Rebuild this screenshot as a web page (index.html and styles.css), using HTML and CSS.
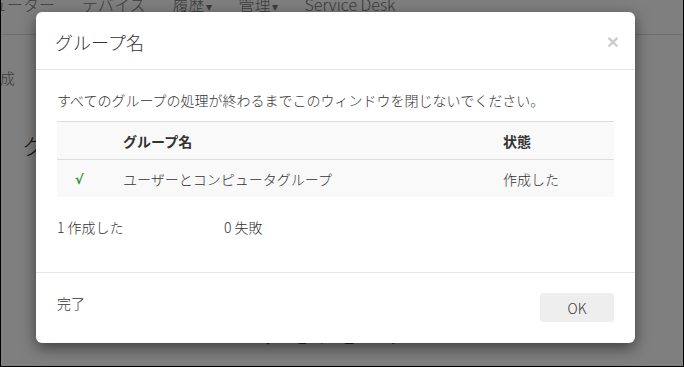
FILE: index.html
```html
<!DOCTYPE html>
<html lang="ja">
<head>
<meta charset="utf-8">
<link rel="stylesheet" href="styles.css">
</head>
<body>
<div class="frame">
  <div class="page">
    <nav class="nav">
      <span class="nav-item first">コンピューター</span>
      <span class="nav-item">デバイス</span>
      <span class="nav-item">履歴<span class="caret">▾</span></span>
      <span class="nav-item">管理<span class="caret">▾</span></span>
      <span class="nav-item">Service Desk</span>
    </nav>
    <div class="crumb">作成</div>
    <div class="page-title">グループの作成</div>
    <div class="under">ユーザーとコンピュータ</div>
  </div>
  <div class="overlay"></div>
  <div class="modal">
    <div class="modal-header">
      <h4 class="modal-title">グループ名</h4>
      <span class="close">×</span>
    </div>
    <div class="modal-body">
      <p class="notice">すべてのグループの処理が終わるまでこのウィンドウを閉じないでください。</p>
      <div class="table">
        <div class="row head">
          <div class="cell c1"></div>
          <div class="cell c2">グループ名</div>
          <div class="cell c3">状態</div>
        </div>
        <div class="row">
          <div class="cell c1"><span class="check">√</span></div>
          <div class="cell c2">ユーザーとコンピュータグループ</div>
          <div class="cell c3">作成した</div>
        </div>
      </div>
      <div class="summary">
        <span class="sum-a">1 作成した</span>
        <span class="sum-b">0 失敗</span>
      </div>
    </div>
    <div class="modal-footer">
      <span class="done">完了</span>
      <button class="btn">OK</button>
    </div>
  </div>
</div>
</body>
</html>
```
FILE: styles.css
```css
* { box-sizing: border-box; }
html, body { margin: 0; padding: 0; }
body {
  width: 684px;
  height: 367px;
  overflow: hidden;
  font-family: "Noto Sans CJK JP", "Liberation Sans", sans-serif;
  font-weight: 300;
  color: #333;
  background: #fff;
}
.frame {
  position: relative;
  width: 684px;
  height: 367px;
  border-left: 1px solid #000;
  border-right: 1px solid #000;
  border-bottom: 1px solid #000;
  overflow: hidden;
}
.page {
  height: 100%;
}
.nav {
  display: flex;
  align-items: flex-start;
  height: 35px;
  border-bottom: 1px solid #ddd;
  font-size: 16px;
  line-height: 22px;
  color: #777;
  white-space: nowrap;
  overflow: hidden;
}
.nav-item { margin-right: 27px; margin-top: -7px; }
.nav-item.first { margin-left: -58px; }
.caret { font-size: 12px; margin-left: 1px; }
.crumb {
  margin-left: -16px;
  margin-top: 32px;
  font-size: 15px;
  color: #777;
}
.page-title {
  margin-left: 22px;
  margin-top: 40px;
  font-size: 22px;
  color: #222;
}
.under {
  margin-left: 228px;
  margin-top: 164px;
  font-size: 16px;
  color: #000;
}
.overlay {
  position: absolute;
  inset: 0;
  background: rgba(0, 0, 0, 0.5);
}
.modal {
  position: absolute;
  left: 35px;
  top: 12px;
  width: 599px;
  height: 331px;
  background: #fff;
  border-radius: 6px;
  box-shadow: 0 5px 15px rgba(0, 0, 0, 0.5);
  display: flex;
  flex-direction: column;
}
.modal-header {
  height: 58px;
  padding: 0 16px 0 19px;
  border-bottom: 1px solid #e5e5e5;
  display: flex;
  align-items: center;
  justify-content: space-between;
}
.modal-title {
  margin: 0;
  font-size: 18px;
  font-weight: 300;
  color: #333;
  padding-top: 2px;
}
.close {
  font-family: "Liberation Sans", sans-serif;
  font-size: 21px;
  font-weight: bold;
  color: #000;
  opacity: 0.2;
  line-height: 1;
  margin-top: 2px;
}
.modal-body {
  height: 203px;
  padding: 20px 21px 0 21px;
  border-bottom: 1px solid #e5e5e5;
  font-size: 14px;
}
.notice {
  margin: 0;
  line-height: 20px;
  color: #333;
}
.table {
  margin-top: 11px;
  border-top: 1px solid #ddd;
}
.row {
  display: grid;
  grid-template-columns: 66px 380px 1fr;
  background: #f9f9f9;
  height: 37px;
  align-items: center;
}
.row.head {
  height: 38px;
  border-bottom: 1px solid #ddd;
  font-weight: bold;
}
.cell { line-height: 20px; }
.c1 { padding-left: 18px; }
.check {
  color: #1f9a2a;
  font-weight: bold;
  font-size: 13px;
  font-family: "DejaVu Sans", sans-serif;
}
.summary {
  margin-top: 20px;
  display: flex;
  line-height: 20px;
}
.sum-a { width: 167px; }
.modal-footer {
  flex: 1;
  display: flex;
  align-items: center;
  justify-content: space-between;
  padding: 0 21px 1px 21px;
  font-size: 14px;
}
.done { margin-top: -10px; }
.btn {
  width: 74px;
  height: 29px;
  border: none;
  border-radius: 3px;
  background: #eee;
  color: #333;
  font-family: "Noto Sans CJK JP", "Liberation Sans", sans-serif;
  font-weight: 300;
  font-size: 14px;
  padding: 0;
}
```
